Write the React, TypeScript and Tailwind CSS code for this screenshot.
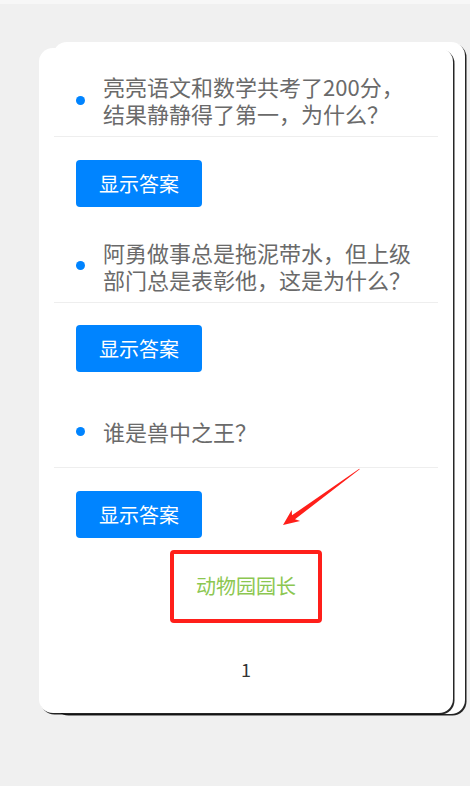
import React from "react";

const font = { fontFamily: '"Noto Sans CJK SC", "Noto Sans", sans-serif' };

function Question({ text, first }: { text: React.ReactNode; first?: boolean }) {
  return (
    <div className={first ? "" : "mt-[23px]"}>
      <div className="h-[72px] flex items-center">
        <div className="w-[49px] flex justify-start pl-[22px]">
          <span className="block w-[9px] h-[9px] rounded-full bg-[#0084ff]" />
        </div>
        <div className="w-[318px] text-[22px] leading-[27px] text-[#6a6a6a]">{text}</div>
      </div>
      <div className="h-px bg-[#eeeeee]" />
      <div className="mt-[22.5px] pl-[22px]">
        <button className="w-[126px] h-[47px] rounded-[4px] bg-[#0084ff] text-white text-[20px] leading-[47px] text-center">
          显示答案
        </button>
      </div>
    </div>
  );
}

export default function App() {
  return (
    <div className="relative min-h-[786px] bg-[#f0f0f0] overflow-hidden" style={font}>
      <div className="h-[4px] bg-[#f7f7f7]" />
      <div className="relative ml-[39px] mt-[44px] w-[414px]">
        <div className="absolute left-[14px] top-[-6px] w-[412px] h-[672px] bg-white rounded-[14px] shadow-[1.5px_1.5px_0.5px_rgba(0,0,0,0.85)]" />
        <div className="relative h-[665px] bg-white rounded-[14px] shadow-[1.5px_1.5px_0.5px_rgba(0,0,0,0.85)] px-[15px] pt-[16px]">
          <Question first text={<>亮亮语文和数学共考了200分，结果静静得了第一，为什么？</>} />
          <Question text={<>阿勇做事总是拖泥带水，但上级部门总是表彰他，这是为什么？</>} />
          <Question text={<>谁是兽中之王？</>} />
          <div className="mt-[12px] flex justify-center">
            <div className="w-[152px] h-[73px] border-[4px] border-[#ff1f1a] rounded-[4px] flex items-center justify-center">
              <span className="text-[20px] leading-[24px] text-[#8cc751]">动物园园长</span>
            </div>
          </div>
          <div className="mt-[34px] text-center text-[18px] leading-[24px] text-[#333333]">1</div>
        </div>
      </div>
      <svg
        className="absolute left-0 top-0 pointer-events-none"
        width="470"
        height="786"
        viewBox="0 0 470 786"
      >
        <polygon
          points="359.7,469.2 295,519.3 300.1,521.1 283,525 291.7,509.9 292,515.3 359.3,468.8"
          fill="#ff1f1a"
        />
      </svg>
    </div>
  );
}
